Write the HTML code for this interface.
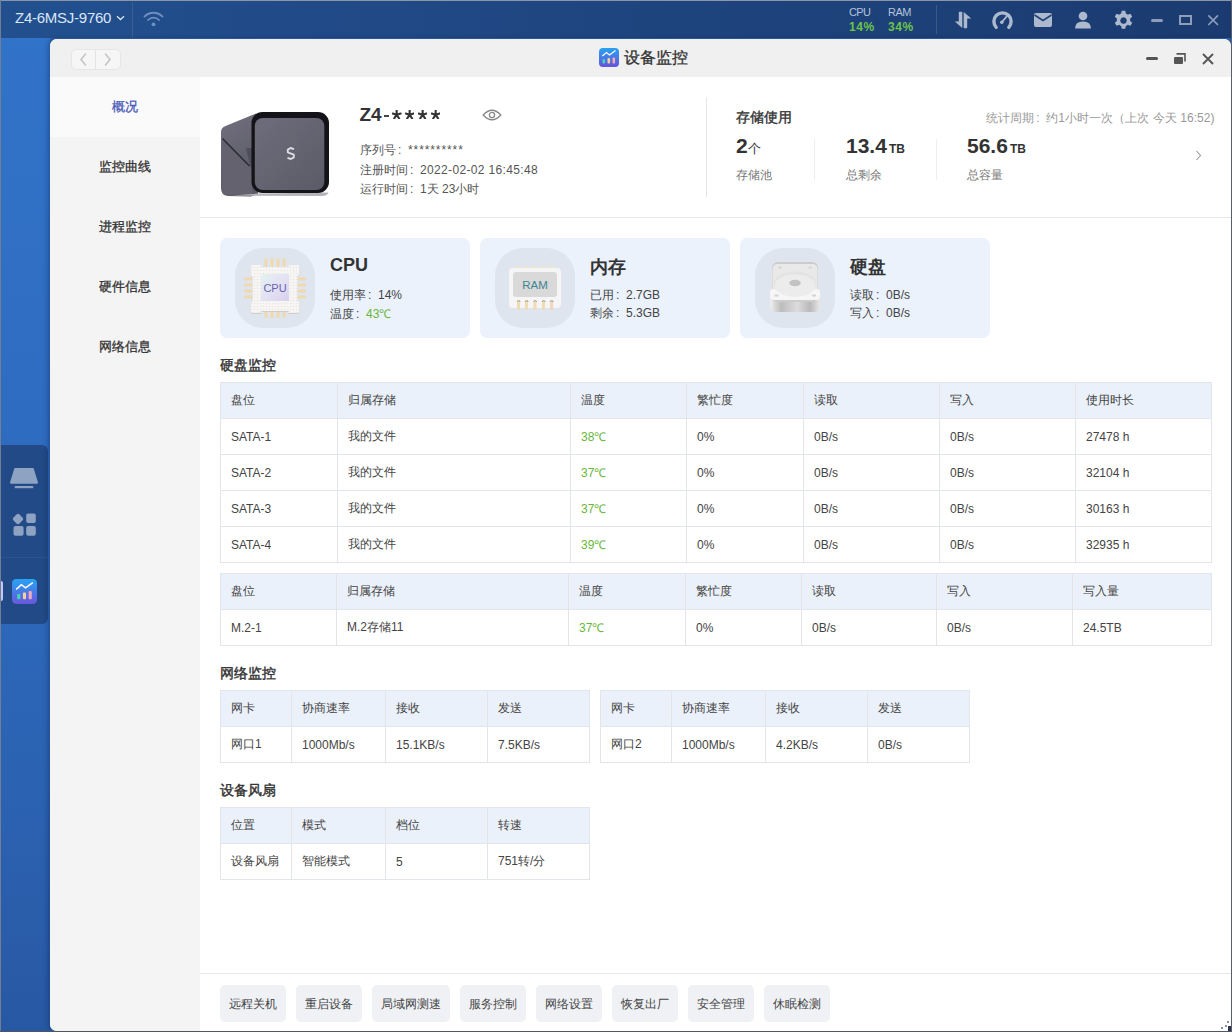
<!DOCTYPE html>
<html><head><meta charset="utf-8">
<style>
*{box-sizing:border-box;margin:0;padding:0}
html,body{width:1232px;height:1032px;overflow:hidden}
body{position:relative;font-family:"Liberation Sans",sans-serif;font-size:12px;color:#444;background:#2b63b0}
.abs{position:absolute}
i.c{font-style:normal;display:inline-block;width:12px;padding-left:2px}
#topbar{left:0;top:0;width:1232px;height:38px;background:linear-gradient(90deg,#22508f 0%,#1f4681 45%,#1b3b70 100%);border-top:1px solid #8a96a8}
#desk{left:0;top:38px;width:50px;height:994px;background:linear-gradient(180deg,#3173c9 0%,#2e6bbf 45%,#2b61b0 80%,#2858a3 100%)}
#frameL{left:0;top:0;width:1px;height:1032px;background:#6f7f96}
#frameR{left:1231px;top:0;width:1px;height:1032px;background:#5a5f66}
#frameB{left:0;top:1031px;width:1232px;height:1px;background:#505560}
#win{left:50px;top:39px;width:1181px;height:992px;background:#fff;border-radius:7px 7px 0 7px;overflow:hidden;box-shadow:-2px 0 5px rgba(10,30,70,0.35)}
#title{left:0;top:0;width:1181px;height:38px;background:#f0f0f0}
#side{left:0;top:38px;width:150px;height:954px;background:#f4f4f4}
.nav{position:absolute;left:0;width:150px;height:60px;line-height:60px;text-align:center;font-size:13px;color:#333;-webkit-text-stroke:0.3px #333}
.nav.act{background:#fafafa;color:#4658b8;-webkit-text-stroke:0.3px #4658b8}
.t{position:absolute;white-space:nowrap}
.sec{position:absolute;font-size:14px;color:#333;left:220px;-webkit-text-stroke:0.4px #333}
table{position:absolute;border-collapse:collapse;table-layout:fixed;font-size:12px;color:#444}
td{border:1px solid #e2e5ea;height:36px;padding:0 0 0 10px;white-space:nowrap;overflow:hidden}
tr.h td{background:#ebf1fa}
.g{color:#67b83a}
.card{position:absolute;top:238px;width:250px;height:100px;background:#ebf2fc;border-radius:7px}
.ibg{position:absolute;left:15px;top:10px;width:80px;height:80px;background:#dfe5ee;border-radius:28px}
.ct{position:absolute;left:110px;top:17px;font-size:18px;font-weight:bold;color:#333}
.cl{position:absolute;left:110px;font-size:12px;color:#444}
.btn{position:absolute;top:985px;height:37px;line-height:39px;background:#eff1f5;border-radius:5px;text-align:center;font-size:12px;color:#444}
</style></head><body>
<div id="desk" class="abs"></div>
<div id="topbar" class="abs">
  <div class="t" style="left:15px;top:8px;font-size:15px;color:#dbe6f6;letter-spacing:-0.25px">Z4-6MSJ-9760</div>
  <svg class="abs" style="left:116px;top:14px" width="9" height="6" viewBox="0 0 9 6"><path d="M1 1.2 L4.5 4.5 L8 1.2" fill="none" stroke="#dbe6f6" stroke-width="1.3"/></svg>
  <div class="abs" style="left:132px;top:1px;width:1px;height:37px;background:#3a5e94"></div>
  <svg class="abs" style="left:143px;top:10px" width="21" height="16" viewBox="0 0 21 16">
    <path d="M1.5 5.6 A12.5 12.5 0 0 1 19.5 5.6" fill="none" stroke="#6f8fc0" stroke-width="1.8" stroke-linecap="round"/>
    <path d="M5 9 A7.6 7.6 0 0 1 16 9" fill="none" stroke="#6f8fc0" stroke-width="1.8" stroke-linecap="round"/>
    <circle cx="10.5" cy="13.3" r="1.9" fill="#6f8fc0"/>
  </svg>
  <div class="t" style="left:849px;top:5px;font-size:11px;color:#b4c3da;letter-spacing:-0.7px">CPU</div>
  <div class="t" style="left:849px;top:19px;font-size:12px;font-weight:bold;color:#6cc44a;letter-spacing:0.6px">14%</div>
  <div class="t" style="left:888px;top:5px;font-size:11px;color:#b4c3da;letter-spacing:-0.5px">RAM</div>
  <div class="t" style="left:888px;top:19px;font-size:12px;font-weight:bold;color:#6cc44a;letter-spacing:0.6px">34%</div>
  <div class="abs" style="left:936px;top:4px;width:1px;height:29px;background:#3a5a8c"></div>
  <svg class="abs" style="left:954px;top:10px" width="18" height="18" viewBox="0 0 18 19" preserveAspectRatio="none">
    <path d="M4.8 1.5 Q4.8 0.8 5.5 0.8 L7.6 0.8 Q8.3 0.8 8.3 1.5 L8.3 18 L0.8 11.2 L4.8 11.2 Z" fill="#adbace"/>
    <path d="M9.7 1 L17.2 7.8 L13.2 7.8 L13.2 17.5 Q13.2 18.2 12.5 18.2 L10.4 18.2 Q9.7 18.2 9.7 17.5 Z" fill="#adbace"/>
  </svg>
  <svg class="abs" style="left:992px;top:9px" width="21" height="20" viewBox="0 0 21 20">
    <path d="M4.2 17.3 A8.6 8.6 0 1 1 16.8 17.3" fill="none" stroke="#adbace" stroke-width="3.4" stroke-linecap="round"/>
    <path d="M9.5 12.6 L15 6" stroke="#adbace" stroke-width="1.8" stroke-linecap="round"/>
    <circle cx="9.8" cy="12.2" r="1.7" fill="#adbace"/>
  </svg>
  <svg class="abs" style="left:1033px;top:11px" width="20" height="16" viewBox="0 0 20 16">
    <rect x="1" y="1" width="18" height="14" rx="2" fill="#adbace"/>
    <path d="M1.5 3 L10 8.5 L18.5 3" fill="none" stroke="#1e4178" stroke-width="1.6"/>
  </svg>
  <svg class="abs" style="left:1074px;top:10px" width="18" height="18" viewBox="0 0 18 18">
    <circle cx="9" cy="5" r="4.3" fill="#adbace"/>
    <path d="M1 17.5 Q1 10.5 9 10.5 Q17 10.5 17 17.5 Z" fill="#adbace"/>
  </svg>
  <svg class="abs" style="left:1113px;top:9px" width="21" height="21" viewBox="0 0 20 20">
    <path fill="#adbace" fill-rule="evenodd" d="M8.3 0.8h3.4l0.5 2.6a7 7 0 0 1 1.9 1.1l2.5-0.9 1.7 2.9-2 1.7a7 7 0 0 1 0 2.2l2 1.7-1.7 2.9-2.5-0.9a7 7 0 0 1-1.9 1.1l-0.5 2.6H8.3l-0.5-2.6a7 7 0 0 1-1.9-1.1l-2.5 0.9-1.7-2.9 2-1.7a7 7 0 0 1 0-2.2l-2-1.7 1.7-2.9 2.5 0.9a7 7 0 0 1 1.9-1.1z M10 6.9a3.1 3.1 0 1 0 0.01 0z"/>
  </svg>
  <div class="abs" style="left:1151px;top:18px;width:12px;height:3px;border-radius:1.5px;background:#8e9dba"></div>
  <div class="abs" style="left:1179px;top:14px;width:12.5px;height:10px;border:2px solid #8e9dba"></div>
  <svg class="abs" style="left:1207px;top:13px" width="12" height="12" viewBox="0 0 12 12"><path d="M1.8 1.8 L10.5 10.5 M10.5 1.8 L1.8 10.5" stroke="#8e9dba" stroke-width="1.7" stroke-linecap="round"/></svg>
</div>
<div class="abs" style="left:0;top:445px;width:48px;height:179px;background:#224a86;border-radius:0 6px 6px 0">
  <svg class="abs" style="left:9px;top:22px" width="30" height="23" viewBox="0 0 30 23">
    <path d="M5.5 1 L24.5 1 L29 15.6 Q29 16.8 27.8 16.8 L2.2 16.8 Q1 16.8 1 15.6 Z" fill="#8ea2c2"/>
    <rect x="5.8" y="19" width="18.4" height="2.2" fill="#8ea2c2"/>
  </svg>
  <svg class="abs" style="left:11px;top:67px" width="27" height="27" viewBox="0 0 27 27">
    <rect x="2.8" y="2.8" width="8.4" height="8.4" rx="1.8" fill="#8ea2c2" transform="rotate(45 7 7)"/>
    <rect x="15.2" y="1.5" width="9.6" height="9.5" rx="2" fill="#8ea2c2"/>
    <rect x="2.5" y="14.1" width="10.1" height="9.6" rx="2" fill="#8ea2c2"/>
    <rect x="15.2" y="14.1" width="9.6" height="9.6" rx="2" fill="#8ea2c2"/>
  </svg>
  <div class="abs" style="left:0;top:112px;width:48px;height:1px;background:#2a5290"></div>
  <div class="abs" style="left:0;top:136px;width:3px;height:20px;border-radius:0 2px 2px 0;background:#c5c8f5"></div>
  <svg class="abs" style="left:12px;top:134px" width="25" height="25" viewBox="0 0 24 24">
    <defs><linearGradient id="ag" x1="0" y1="0" x2="0" y2="1"><stop offset="0" stop-color="#26a4f2"/><stop offset="1" stop-color="#6a55dd"/></linearGradient></defs>
    <rect x="0" y="0" width="24" height="24" rx="4" fill="url(#ag)"/>
    <path d="M4 10 L9 5.5 L13 8.5 L20 3.5" fill="none" stroke="#fff" stroke-width="1.4"/>
    <rect x="5" y="14.5" width="3" height="5" rx="1" fill="#3fd8b0"/>
    <rect x="10.5" y="13" width="3" height="6.5" rx="1" fill="#f6cf9a"/>
    <rect x="16" y="11.5" width="3" height="8" rx="1" fill="#f4a9b8"/>
  </svg>
</div>
<div id="win" class="abs">
  <div id="title" class="abs">
    <div class="abs" style="left:21px;top:10px;width:50px;height:21px;border:1px solid #e6e6e6;border-radius:5px;background:#f6f6f6"></div>
    <div class="abs" style="left:45px;top:10px;width:1px;height:21px;background:#e3e3e3"></div>
    <svg class="abs" style="left:28px;top:13px" width="10" height="15" viewBox="0 0 10 15"><path d="M7.5 2 L3 7.5 L7.5 13" fill="none" stroke="#c4c4c4" stroke-width="1.6" stroke-linecap="round"/></svg>
    <svg class="abs" style="left:53px;top:13px" width="10" height="15" viewBox="0 0 10 15"><path d="M2.5 2 L7 7.5 L2.5 13" fill="none" stroke="#c4c4c4" stroke-width="1.6" stroke-linecap="round"/></svg>
    <svg class="abs" style="left:549px;top:9px" width="20" height="19" viewBox="0 0 20 19">
      <defs><linearGradient id="tg" x1="0" y1="0" x2="0" y2="1"><stop offset="0" stop-color="#27a2f2"/><stop offset="1" stop-color="#6752de"/></linearGradient></defs>
      <rect x="0" y="0" width="20" height="19" rx="4" fill="url(#tg)"/>
      <path d="M3.3 8 L7.5 4.5 L10.5 7 L16.5 2.5" fill="none" stroke="#fff" stroke-width="1.2"/>
      <rect x="3.5" y="11" width="2.6" height="4.5" rx="1" fill="#3fd8b0"/>
      <rect x="8.5" y="10" width="2.6" height="5.5" rx="1" fill="#f6cf9a"/>
      <rect x="13.5" y="9.5" width="2.6" height="6" rx="1" fill="#f4a9b8"/>
    </svg>
    <div class="t" style="left:574px;top:9px;font-size:16px;color:#333;-webkit-text-stroke:0.3px #333">设备监控</div>
    <div class="abs" style="left:1096px;top:18px;width:12px;height:3px;border-radius:1.5px;background:#555"></div>
    <div class="abs" style="left:1124px;top:18px;width:9px;height:7px;background:#555;border-radius:1px"></div>
    <svg class="abs" style="left:1126px;top:14px" width="10" height="9" viewBox="0 0 10 9"><path d="M0.5 0.9 L9 0.9 L9 8.5" fill="none" stroke="#555" stroke-width="1.6"/></svg>
    <svg class="abs" style="left:1152px;top:14px" width="12" height="12" viewBox="0 0 12 12"><path d="M1 1 L11 11 M11 1 L1 11" stroke="#555" stroke-width="1.9"/></svg>
  </div>
  <div id="side" class="abs">
    <div class="nav act" style="top:0">概况</div>
    <div class="nav" style="top:60px">监控曲线</div>
    <div class="nav" style="top:120px">进程监控</div>
    <div class="nav" style="top:180px">硬件信息</div>
    <div class="nav" style="top:240px">网络信息</div>
  </div>
</div>
<!--MAIN-->
<svg class="abs" style="left:218px;top:108px" width="114" height="92" viewBox="0 0 114 92">
  <defs>
    <linearGradient id="dside" x1="0" y1="0" x2="0.3" y2="1"><stop offset="0" stop-color="#72707e"/><stop offset="1" stop-color="#5a5966"/></linearGradient>
    <linearGradient id="dface" x1="0" y1="0" x2="1" y2="1"><stop offset="0" stop-color="#6e6d7b"/><stop offset="1" stop-color="#5b5a67"/></linearGradient>
  </defs>
  <path d="M3 24 Q3 19.5 7.5 18 L38 5.5 L40 86 L33 88.5 L10 88 Q3 87.5 3 80 Z" fill="url(#dside)"/>
  <path d="M4.5 31 L31 58 L34 60 L34 86 L10 87.5 Q4 87 4 80 Z" fill="#63626e"/>
  <path d="M4.5 30.5 L31.5 58" stroke="#2c2c34" stroke-width="1.6"/>
  <path d="M28 40 Q31 55 34 62 L34 40 Z" fill="#4a4955" opacity="0.8"/>
  <path d="M14 87.6 L104 88 Q109.5 87.6 110.5 84.5 L40 85.5 Z" fill="#b4b4ba"/>
  <rect x="33.5" y="4" width="77.5" height="81" rx="11" fill="#141418"/>
  <rect x="36.8" y="10" width="69.5" height="72" rx="8" fill="url(#dface)"/>
  <path d="M76 41.2 L72.5 40 L69.8 41.6 L69.8 44.4 L75.8 46.6 L75.8 49.4 L73 51 L69.5 49.8" fill="none" stroke="#dcdce2" stroke-width="1.9" stroke-linejoin="bevel"/>
</svg>
<div class="t" style="left:359.5px;top:104px;font-size:19px;font-weight:bold;color:#333">Z4</div><div class="abs" style="left:384px;top:115px;width:5px;height:1.6px;background:#444"></div><svg class="abs" style="left:392.4px;top:109.5px" width="9.3" height="9.5" viewBox="0 0 9.3 9.5"><path d="M4.65 4.65 L4.65 0.50 M4.65 4.65 L8.64 3.54 M4.65 4.65 L7.12 8.46 M4.65 4.65 L2.18 8.46 M4.65 4.65 L0.66 3.54 " stroke="#333" stroke-width="2.1" stroke-linecap="round"/></svg><svg class="abs" style="left:405.1px;top:109.5px" width="9.3" height="9.5" viewBox="0 0 9.3 9.5"><path d="M4.65 4.65 L4.65 0.50 M4.65 4.65 L8.64 3.54 M4.65 4.65 L7.12 8.46 M4.65 4.65 L2.18 8.46 M4.65 4.65 L0.66 3.54 " stroke="#333" stroke-width="2.1" stroke-linecap="round"/></svg><svg class="abs" style="left:417.8px;top:109.5px" width="9.3" height="9.5" viewBox="0 0 9.3 9.5"><path d="M4.65 4.65 L4.65 0.50 M4.65 4.65 L8.64 3.54 M4.65 4.65 L7.12 8.46 M4.65 4.65 L2.18 8.46 M4.65 4.65 L0.66 3.54 " stroke="#333" stroke-width="2.1" stroke-linecap="round"/></svg><svg class="abs" style="left:430.5px;top:109.5px" width="9.3" height="9.5" viewBox="0 0 9.3 9.5"><path d="M4.65 4.65 L4.65 0.50 M4.65 4.65 L8.64 3.54 M4.65 4.65 L7.12 8.46 M4.65 4.65 L2.18 8.46 M4.65 4.65 L0.66 3.54 " stroke="#333" stroke-width="2.1" stroke-linecap="round"/></svg>
<svg class="abs" style="left:482px;top:108px" width="20" height="14" viewBox="0 0 20 14">
  <path d="M1.2 7 Q10 -2.5 18.8 7 Q10 16.5 1.2 7 Z" fill="none" stroke="#888" stroke-width="1.3"/>
  <circle cx="10" cy="7" r="2.6" fill="none" stroke="#888" stroke-width="1.3"/>
</svg>
<div class="t" style="left:360px;top:142px;color:#555">序列号<i class="c">:</i><span style="letter-spacing:0.9px">**********</span></div>
<div class="t" style="left:360px;top:162px;color:#555">注册时间<i class="c">:</i><span style="letter-spacing:0.35px">2022-02-02 16:45:48</span></div>
<div class="t" style="left:360px;top:181px;color:#555">运行时间<i class="c">:</i>1天 23小时</div>
<div class="abs" style="left:706px;top:97px;width:1px;height:100px;background:#e6e6e6"></div>
<div class="t" style="left:736px;top:109px;font-size:14px;color:#333;-webkit-text-stroke:0.4px #333">存储使用</div>
<div class="t" style="left:986px;top:110px;color:#999;letter-spacing:0.05px">统计周期<i class="c">:</i>约1小时一次（上次 今天 16:52)</div>
<div class="t" style="left:736px;top:134px;font-size:21px;font-weight:bold;color:#333">2<span style="font-size:13px;font-weight:normal">个</span></div>
<div class="t" style="left:736px;top:167px;color:#777">存储池</div>
<div class="abs" style="left:814px;top:139px;width:1px;height:41px;background:#eeeeee"></div>
<div class="t" style="left:846px;top:134px;font-size:21px;font-weight:bold;color:#333">13.4<span style="font-size:12px;margin-left:2px">TB</span></div>
<div class="t" style="left:846px;top:167px;color:#777">总剩余</div>
<div class="abs" style="left:936px;top:139px;width:1px;height:41px;background:#eeeeee"></div>
<div class="t" style="left:967px;top:134px;font-size:21px;font-weight:bold;color:#333">56.6<span style="font-size:12px;margin-left:2px">TB</span></div>
<div class="t" style="left:967px;top:167px;color:#777">总容量</div>
<svg class="abs" style="left:1195px;top:150px" width="7" height="11" viewBox="0 0 7 11"><path d="M1.5 1 L5.5 5.5 L1.5 10" fill="none" stroke="#999" stroke-width="1.1"/></svg>
<div class="abs" style="left:200px;top:217px;width:1031px;height:1px;background:#e8e8e8"></div>
<div class="card" style="left:220px">
  <div class="ibg"></div>
  <svg class="abs" style="left:15px;top:10px" width="80" height="80" viewBox="0 0 80 80">
    <defs>
      <pattern id="dots" width="3" height="3" patternUnits="userSpaceOnUse"><rect width="3" height="3" fill="#f6f5f3"/><circle cx="1.5" cy="1.5" r="0.4" fill="#d4cfc8"/></pattern>
      <linearGradient id="cpuin" x1="0" y1="0" x2="1" y2="1"><stop offset="0" stop-color="#e2f3ef"/><stop offset="0.5" stop-color="#e4e2f4"/><stop offset="1" stop-color="#d8d0ec"/></linearGradient>
    </defs>
    <g fill="#efd9ad">
      <rect x="29.5" y="10" width="3" height="9" rx="1.5"/><rect x="35.5" y="10" width="3" height="9" rx="1.5"/><rect x="41.5" y="10" width="3" height="9" rx="1.5"/><rect x="47.5" y="10" width="3" height="9" rx="1.5"/>
      <rect x="29.5" y="61" width="3" height="9" rx="1.5"/><rect x="35.5" y="61" width="3" height="9" rx="1.5"/><rect x="41.5" y="61" width="3" height="9" rx="1.5"/><rect x="47.5" y="61" width="3" height="9" rx="1.5"/>
      <rect x="9" y="29.5" width="9" height="3" rx="1.5"/><rect x="9" y="35.5" width="9" height="3" rx="1.5"/><rect x="9" y="41.5" width="9" height="3" rx="1.5"/><rect x="9" y="47.5" width="9" height="3" rx="1.5"/>
      <rect x="62" y="29.5" width="9" height="3" rx="1.5"/><rect x="62" y="35.5" width="9" height="3" rx="1.5"/><rect x="62" y="41.5" width="9" height="3" rx="1.5"/><rect x="62" y="47.5" width="9" height="3" rx="1.5"/>
    </g>
    <path d="M17.5 17 L27 17 Q27 19 25 19 L55 19 Q53 19 53 17 L62.5 17 Q64.5 17 64.5 19 L64.5 27 Q62.5 27 62.5 29 L62.5 53 Q64.5 53 64.5 55 L64.5 63 Q64.5 65 62.5 65 L53 65 Q53 63 55 63 L25 63 Q27 63 27 65 L17.5 65 Q15.5 65 15.5 63 L15.5 55 Q17.5 55 17.5 53 L17.5 29 Q15.5 29 15.5 27 L15.5 19 Q15.5 17 17.5 17 Z" fill="#c9c6c2" transform="translate(0,0.8)"/>
    <path d="M17.5 17 L27 17 Q27 19 25 19 L55 19 Q53 19 53 17 L62.5 17 Q64.5 17 64.5 19 L64.5 27 Q62.5 27 62.5 29 L62.5 53 Q64.5 53 64.5 55 L64.5 63 Q64.5 65 62.5 65 L53 65 Q53 63 55 63 L25 63 Q27 63 27 65 L17.5 65 Q15.5 65 15.5 63 L15.5 55 Q17.5 55 17.5 53 L17.5 29 Q15.5 29 15.5 27 L15.5 19 Q15.5 17 17.5 17 Z" fill="url(#dots)"/>
    <rect x="26" y="26" width="28" height="27" fill="url(#cpuin)"/>
    <text x="40" y="44" text-anchor="middle" font-family="Liberation Sans" font-size="11" fill="#6a64b0">CPU</text>
  </svg>
  <div class="ct">CPU</div>
  <div class="cl" style="top:49px">使用率<i class="c">:</i>14%</div>
  <div class="cl" style="top:67px">温度<i class="c">:</i><span class="g">43℃</span></div>
</div>
<div class="card" style="left:480px">
  <div class="ibg"></div>
  <svg class="abs" style="left:15px;top:10px" width="80" height="80" viewBox="0 0 80 80">
    <g fill="#efdcb4"><rect x="22" y="51" width="3" height="11" rx="1.5"/><rect x="30" y="51" width="3" height="11" rx="1.5"/><rect x="38.5" y="51" width="3" height="11" rx="1.5"/><rect x="47" y="51" width="3" height="11" rx="1.5"/><rect x="55" y="51" width="3.2" height="11" rx="1.5" fill="#f1d6c4"/></g>
    <g fill="#f1e4c8"><rect x="21" y="18" width="5" height="3" rx="1.5"/><rect x="29" y="18" width="5" height="3" rx="1.5"/><rect x="37.5" y="18" width="5" height="3" rx="1.5"/><rect x="46" y="18" width="5" height="3" rx="1.5"/><rect x="54" y="18" width="5" height="3" rx="1.5"/></g><rect x="14" y="20" width="52" height="40" rx="4" fill="#f5f5f5"/>
    <rect x="18" y="24" width="44" height="25" rx="3" fill="#d9d9d9"/>
    <g fill="#efdcb4"><rect x="22" y="52" width="3" height="10" rx="1.5"/><rect x="30" y="52" width="3" height="10" rx="1.5"/><rect x="38.5" y="52" width="3" height="10" rx="1.5"/><rect x="47" y="52" width="3" height="10" rx="1.5"/><rect x="55" y="52" width="3.2" height="10" rx="1.5" fill="#f1d6c4"/></g>
    <g fill="none" stroke="#a39b8c" stroke-width="0.9"><path d="M22.3 54 A1.4 1.4 0 0 1 25.1 54"/><path d="M30.3 54 A1.4 1.4 0 0 1 33.1 54"/><path d="M38.8 54 A1.4 1.4 0 0 1 41.6 54"/><path d="M47.3 54 A1.4 1.4 0 0 1 50.1 54"/><path d="M55.3 54 A1.4 1.4 0 0 1 58.1 54"/></g>
    <text x="40" y="41" text-anchor="middle" font-family="Liberation Sans" font-size="11.5" fill="#3f8592">RAM</text>
  </svg>
  <div class="ct">内存</div>
  <div class="cl" style="top:49px">已用<i class="c">:</i>2.7GB</div>
  <div class="cl" style="top:67px">剩余<i class="c">:</i>5.3GB</div>
</div>
<div class="card" style="left:740px">
  <div class="ibg"></div>
  <svg class="abs" style="left:15px;top:10px" width="80" height="80" viewBox="0 0 80 80">
    <defs>
      <linearGradient id="hband" x1="0" y1="0" x2="1" y2="0"><stop offset="0" stop-color="#f0f0f0"/><stop offset="0.22" stop-color="#bdbdbd"/><stop offset="0.55" stop-color="#dcdcdc"/><stop offset="0.8" stop-color="#b9b9b9"/><stop offset="1" stop-color="#e8e8e8"/></linearGradient>
    </defs>
    <rect x="15" y="44" width="50" height="20" rx="5" fill="url(#hband)"/>
    <rect x="17" y="14" width="46" height="40" rx="6" fill="#cccccc"/>
    <rect x="17.5" y="16" width="45" height="36" rx="5" fill="#e9e9e9"/>
    <path d="M15 44 Q15 42 17 41 L63 41 Q65 42 65 44 L65 48 Q65 52 61 52 L19 52 Q15 52 15 48 Z" fill="#f6f6f6"/>
    <ellipse cx="40" cy="36" rx="21.5" ry="12.5" fill="#e3e3e3"/>
    <ellipse cx="40" cy="37.5" rx="20.5" ry="11" fill="#ececec"/>
    <ellipse cx="40" cy="35" rx="5.8" ry="3.3" fill="#c2c2c2"/>
    <ellipse cx="21.5" cy="47.5" rx="2.2" ry="1.3" fill="#d6d6d6"/><ellipse cx="59" cy="47.5" rx="2.2" ry="1.3" fill="#d6d6d6"/>
    <ellipse cx="25" cy="19.5" rx="1.8" ry="0.9" fill="#d4d4d4"/><ellipse cx="55" cy="19.5" rx="1.8" ry="0.9" fill="#d4d4d4"/>
  </svg>
  <div class="ct">硬盘</div>
  <div class="cl" style="top:49px">读取<i class="c">:</i>0B/s</div>
  <div class="cl" style="top:67px">写入<i class="c">:</i>0B/s</div>
</div>
<div class="sec" style="top:357px">硬盘监控</div>
<div class="sec" style="top:665px">网络监控</div>
<div class="sec" style="top:782px">设备风扇</div>
<div class="abs" style="left:200px;top:973px;width:1031px;height:1px;background:#e8e8e8"></div>
<table style="left:220px;top:382px;width:992px"><colgroup><col style="width:117px"><col style="width:233px"><col style="width:116px"><col style="width:117px"><col style="width:136px"><col style="width:136px"><col style="width:136px"></colgroup><tr class="h"><td>盘位</td><td>归属存储</td><td>温度</td><td>繁忙度</td><td>读取</td><td>写入</td><td>使用时长</td></tr><tr><td>SATA-1</td><td>我的文件</td><td><span class="g">38℃</span></td><td>0%</td><td>0B/s</td><td>0B/s</td><td>27478 h</td></tr><tr><td>SATA-2</td><td>我的文件</td><td><span class="g">37℃</span></td><td>0%</td><td>0B/s</td><td>0B/s</td><td>32104 h</td></tr><tr><td>SATA-3</td><td>我的文件</td><td><span class="g">37℃</span></td><td>0%</td><td>0B/s</td><td>0B/s</td><td>30163 h</td></tr><tr><td>SATA-4</td><td>我的文件</td><td><span class="g">39℃</span></td><td>0%</td><td>0B/s</td><td>0B/s</td><td>32935 h</td></tr></table>
<table style="left:220px;top:573px;width:992px"><colgroup><col style="width:116px"><col style="width:232px"><col style="width:117px"><col style="width:116px"><col style="width:135px"><col style="width:136px"><col style="width:139px"></colgroup><tr class="h"><td>盘位</td><td>归属存储</td><td>温度</td><td>繁忙度</td><td>读取</td><td>写入</td><td>写入量</td></tr><tr><td>M.2-1</td><td>M.2存储11</td><td><span class="g">37℃</span></td><td>0%</td><td>0B/s</td><td>0B/s</td><td>24.5TB</td></tr></table>
<table style="left:220px;top:690px;width:370px"><colgroup><col style="width:71px"><col style="width:94px"><col style="width:102px"><col style="width:102px"></colgroup><tr class="h"><td>网卡</td><td>协商速率</td><td>接收</td><td>发送</td></tr><tr><td>网口1</td><td>1000Mb/s</td><td>15.1KB/s</td><td>7.5KB/s</td></tr></table>
<table style="left:600px;top:690px;width:370px"><colgroup><col style="width:71px"><col style="width:94px"><col style="width:102px"><col style="width:102px"></colgroup><tr class="h"><td>网卡</td><td>协商速率</td><td>接收</td><td>发送</td></tr><tr><td>网口2</td><td>1000Mb/s</td><td>4.2KB/s</td><td>0B/s</td></tr></table>
<table style="left:220px;top:807px;width:370px"><colgroup><col style="width:71px"><col style="width:94px"><col style="width:102px"><col style="width:102px"></colgroup><tr class="h"><td>位置</td><td>模式</td><td>档位</td><td>转速</td></tr><tr><td>设备风扇</td><td>智能模式</td><td>5</td><td>751转/分</td></tr></table>
<div class="btn" style="left:220px;width:66px">远程关机</div>
<div class="btn" style="left:296px;width:66px">重启设备</div>
<div class="btn" style="left:372px;width:78px">局域网测速</div>
<div class="btn" style="left:460px;width:66px">服务控制</div>
<div class="btn" style="left:536px;width:66px">网络设置</div>
<div class="btn" style="left:612px;width:66px">恢复出厂</div>
<div class="btn" style="left:688px;width:66px">安全管理</div>
<div class="btn" style="left:764px;width:66px">休眠检测</div>
<div class="abs" style="left:1227px;top:1021px;width:2px;height:2px;background:#8a93a6"></div>
<div class="abs" style="left:1225px;top:1025px;width:2px;height:2px;background:#8a93a6"></div>
<div class="abs" style="left:1221px;top:1027px;width:2px;height:2px;background:#8a93a6"></div>
<div class="abs" style="left:1228px;top:1026px;width:3px;height:5px;background:#2a3550"></div>
<div id="frameL" class="abs"></div>
<div id="frameR" class="abs"></div>
<div id="frameB" class="abs"></div>
</body></html>
